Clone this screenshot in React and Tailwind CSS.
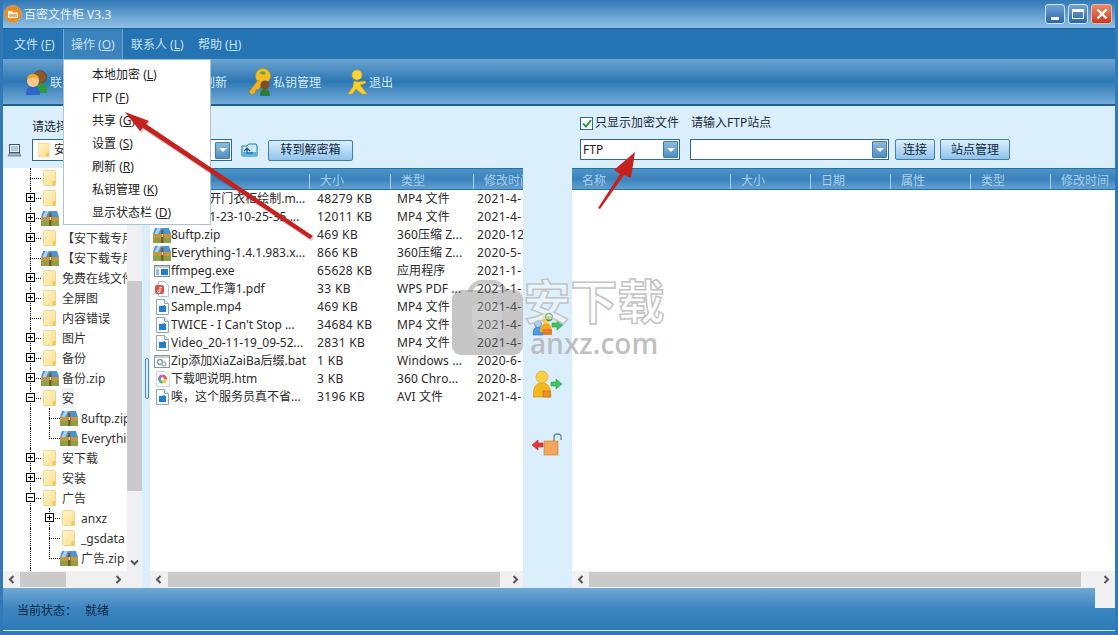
const files = [
  { icon: 'doc', name: '2021-0开门衣柜绘制.m...', size: '48279 KB', type: 'MP4 文件', date: '2021-4-' },
  { icon: 'doc', name: '2021-01-23-10-25-35....', size: '12011 KB', type: 'MP4 文件', date: '2021-4-' },
  { icon: 'zip', name: '8uftp.zip', size: '469 KB', type: '360压缩 Z...', date: '2020-12' },
  { icon: 'zip', name: 'Everything-1.4.1.983.x...', size: '866 KB', type: '360压缩 Z...', date: '2020-5-' },
  { icon: 'exe', name: 'ffmpeg.exe', size: '65628 KB', type: '应用程序', date: '2021-1-' },
  { icon: 'pdf', name: 'new_工作簿1.pdf', size: '33 KB', type: 'WPS PDF ...', date: '2021-1-' },
  { icon: 'doc', name: 'Sample.mp4', size: '469 KB', type: 'MP4 文件', date: '2021-4-' },
  { icon: 'doc', name: "TWICE - I Can't Stop ...", size: '34684 KB', type: 'MP4 文件', date: '2021-4-' },
  { icon: 'doc', name: 'Video_20-11-19_09-52...', size: '2831 KB', type: 'MP4 文件', date: '2021-4-' },
  { icon: 'bat', name: 'Zip添加XiaZaiBa后缀.bat', size: '1 KB', type: 'Windows ...', date: '2020-6-' },
  { icon: 'htm', name: '下载吧说明.htm', size: '3 KB', type: '360 Chro...', date: '2020-8-' },
  { icon: 'doc', name: '唉，这个服务员真不省...', size: '3196 KB', type: 'AVI 文件', date: '2021-4-' },
];

const tree = [
  { name: '' , mark: 'none' },
  { name: '', mark: 'plus' },
  { name: '', mark: 'plus', zip: true },
  { name: '【安下载专用', mark: 'plus' },
  { name: '【安下载专用', mark: 'none', zip: true },
  { name: '免费在线文件', mark: 'plus' },
  { name: '全屏图', mark: 'plus' },
  { name: '内容错误', mark: 'none' },
  { name: '图片', mark: 'plus' },
  { name: '备份', mark: 'plus' },
  { name: '备份.zip', mark: 'plus', zip: true },
  { name: '安', mark: 'minus', selected: true },
  { name: '8uftp.zip', level: 2, zip: true, mark: 'none' },
  { name: 'Everything', level: 2, zip: true, mark: 'none', last: true },
  { name: '安下载', mark: 'plus' },
  { name: '安装', mark: 'plus' },
  { name: '广告', mark: 'minus' },
  { name: 'anxz', level: 2, mark: 'plus' },
  { name: '_gsdata', level: 2, mark: 'none' },
  { name: '广告.zip', level: 2, zip: true, mark: 'none', last: true },
];

const menuItems = [['本地加密', 'L'], ['FTP', 'F'], ['共享', 'G'], ['设置', 'S'], ['刷新', 'R'], ['私钥管理', 'K'], ['显示状态栏', 'D']];

const Folder = () => (
  <svg width="14" height="17" viewBox="0 0 14 17" className="shrink-0">
    <defs>
      <linearGradient id="fold" x1="0" y1="0" x2="1" y2="1">
        <stop offset="0" stopColor="#fff4cc" />
        <stop offset="1" stopColor="#fbdf8e" />
      </linearGradient>
    </defs>
    <path d="M1.5.5h10a1 1 0 0 1 1 1v14h-11a1 1 0 0 1-1-1v-13a1 1 0 0 1 1-1z" fill="url(#fold)" stroke="#eed68c" />
    <path d="M9.5 15.5v-4l3-1v5z" fill="#f3c95f" />
  </svg>
);

const Zip = () => (
  <svg width="18" height="15" viewBox="0 0 18 15" className="shrink-0">
    <path d="M2 0h14l2 6H0z" fill="#4b95d4" />
    <path d="M1.500 6l3-6h3.500l-3 6z" fill="#a9d4f2" />
    <rect y="6" width="18" height="4" fill="#c8963f" />
    <rect y="10" width="18" height="5" fill="#8aa14a" />
    <rect x="8" y="2" width="2.500" height="13" fill="#7a5a28" />
    <rect x="8.500" y="6" width="1.500" height="3" fill="#f2d27a" />
  </svg>
);

const FileIcon = ({ type }) => {
  if (type === 'zip') return <Zip />;
  if (type === 'exe')
    return (
      <svg width="16" height="12" viewBox="0 0 16 12">
        <rect x=".5" y=".5" width="15" height="11" fill="#fff" stroke="#7a8a99" />
        <rect x="1" y="1" width="14" height="2" fill="#c5ccd3" />
        <rect x="7" y="4" width="7" height="6" fill="#1c7ed0" />
        <path d="M2 5h3M2 7h3M2 9h3" stroke="#1c7ed0" />
      </svg>
    );
  if (type === 'pdf')
    return (
      <svg width="14" height="16" viewBox="0 0 14 16">
        <path d="M3.5.5h6l4 4v11h-10z" fill="#fff" stroke="#b9c0c7" />
        <rect y="4" width="9" height="9" rx="2" fill="#d9504e" />
        <path d="M5 6v4.5a1.2 1.2 0 1 1-1.2-1.2M5 6l2 1" stroke="#fff" fill="none" />
      </svg>
    );
  if (type === 'bat')
    return (
      <svg width="16" height="13" viewBox="0 0 16 13">
        <rect x=".5" y=".5" width="15" height="12" fill="#fff" stroke="#8d959d" />
        <rect x="1" y="1" width="14" height="2" fill="#c9ced3" />
        <circle cx="6" cy="7" r="2.5" fill="none" stroke="#8b98a5" strokeWidth="1.4" />
        <circle cx="10" cy="9" r="2" fill="none" stroke="#a8b2bb" strokeWidth="1.4" />
      </svg>
    );
  if (type === 'htm')
    return (
      <svg width="15" height="16" viewBox="0 0 15 16">
        <path d="M1.5.5h9l4 4v11h-13z" fill="#fff" stroke="#cfd4d9" />
        <path d="M7.5 3.5a4.5 4.5 0 0 1 4.5 4.5H7.5z" fill="#f0524f" />
        <path d="M12 8a4.5 4.5 0 0 1-4.5 4.5V8z" fill="#f7c531" />
        <path d="M7.5 12.5A4.5 4.5 0 0 1 3 8h4.5z" fill="#49b96c" />
        <path d="M3 8a4.5 4.5 0 0 1 4.5-4.5V8z" fill="#b25be0" />
        <circle cx="7.5" cy="8" r="1.7" fill="#fff" />
      </svg>
    );
  return (
    <svg width="13" height="16" viewBox="0 0 13 16">
      <path d="M.5.5h8l4 4v11H.5z" fill="#fff" stroke="#8fa6ba" />
      <path d="M8.5.5v4h4" fill="#e6edf3" stroke="#8fa6ba" />
      <rect x="3" y="7" width="7" height="6" fill="#1f7fd1" />
      <path d="M3 8.5l6-2" stroke="#1f7fd1" strokeWidth="1.2" />
    </svg>
  );
};

// tree guide: dotted stem, optional elbow and +/- box on top of it
const Stem = ({ width, elbow, mark, last }) => (
  <div className="relative self-stretch shrink-0" style={{ width }}>
    <div className={`absolute left-0 top-0 border-l border-dotted border-black ${last ? 'h-[11px]' : 'h-full'}`} />
    {elbow && <div className="absolute left-0 top-[10px] w-[11px] border-t border-dotted border-black" />}
    {mark && mark !== 'none' && (
      <div className="absolute left-[-4px] top-[5px] w-[9px] h-[9px] border border-black bg-white flex items-center justify-center">
        <div className="relative w-[5px] h-[1px] bg-black">
          {mark === 'plus' && <div className="absolute left-[2px] top-[-2px] w-[1px] h-[5px] bg-black" />}
        </div>
      </div>
    )}
  </div>
);

const TreeRow = ({ item }) => (
  <div className="h-5 flex items-center pl-[27px] whitespace-nowrap text-[12px] text-[#333]">
    {item.level === 2 ? (
      <>
        <Stem width={19} />
        <Stem width={13} elbow mark={item.mark} last={item.last} />
      </>
    ) : (
      <Stem width={13} elbow mark={item.mark} />
    )}
    {item.zip ? (
      <div className="-ml-[2px] mr-[3px]"><Zip /></div>
    ) : (
      <div className="mr-[5px]"><Folder /></div>
    )}
    <span className={`pt-[2px] ${item.selected ? 'bg-[#efeff1]' : ''}`}>{item.name}</span>
  </div>
);

const ComboArrow = () => (
  <div className="w-[15px] h-[17px] border border-[#3f7aa8] bg-linear-to-b from-[#8dbbe0] to-[#4f8fc2] flex items-center justify-center shrink-0 rounded-[1px]">
    <div className="w-0 h-0 border-x-[4px] border-x-transparent border-t-[4px] border-t-white" />
  </div>
);

const Btn = ({ w, children }) => (
  <button className={`${w} h-[21px] border border-[#3f80a8] rounded-[2px] bg-linear-to-b from-[#dcefFB] to-[#8fc3ec] text-[12px] text-[#10283c] flex items-center justify-center`}>
    {children}
  </button>
);

const HeadCell = ({ w, children }) => (
  <div className={`${w} h-[15px] border-l border-[#a9d0ea] pl-[10px] flex items-center shrink-0`}>{children}</div>
);

const Scroll = ({ className = '', thumb, rightAt }) => (
  <div className={`h-[17px] bg-[#f0eff2] flex items-center relative ${className}`}>
    <svg width="7" height="9" viewBox="0 0 7 9" className="absolute left-[5px] top-[4px]">
      <path d="M5.5 1L2 4.5 5.5 8" fill="none" stroke="#555" strokeWidth="2" />
    </svg>
    <div className="h-[15px] bg-[#cbc9cc]" style={thumb} />
    <svg width="7" height="9" viewBox="0 0 7 9" className="absolute top-[4px]" style={{ right: rightAt }}>
      <path d="M1.5 1l3.500 3.500L1.500 8" fill="none" stroke="#555" strokeWidth="2" />
    </svg>
  </div>
);

const GreenArrow = ({ x, y }) => (
  <path transform={`translate(${x} ${y})`} d="M0 3h5V0l6 5-6 5V7H0z" fill="#42c45a" stroke="#2b9a44" strokeWidth=".6" />
);

const Watermark = () => (
  <div className="absolute left-[452px] top-[280px] flex pointer-events-none">
    <svg width="71" height="76" viewBox="0 0 71 76">
      <path d="M18 12C20-2 50-2 53 12" fill="none" stroke="#8a8a8a" strokeOpacity=".45" strokeWidth="5" />
      <rect y="10" width="71" height="65" rx="9" fill="#777" fillOpacity=".42" />
      <path d="M20 26l15-6 15 6v17c0 10-8 16-15 19-7-3-15-9-15-19z" fill="#fff" fillOpacity=".14" />
    </svg>
    <div className="-ml-[1px] w-[144px] flex flex-col items-center -mt-[8px]">
      <div className="text-[47px] leading-[58px] font-bold text-white/35 [-webkit-text-stroke:1.5px_#c4c4c4]">安下载</div>
      <div className="text-[28px] leading-[28px] font-semibold text-[#b5b5b5]/85 font-['Open_Sans',sans-serif] -mt-[1px]">anxz.com</div>
    </div>
  </div>
);

const Arrows = () => (
  <svg width="1118" height="635" viewBox="0 0 1118 635" className="absolute left-0 top-0 pointer-events-none">
    <path d="M125 112l24 9-3 3 167 112-3 3-167-111-3 3z" fill="#000" fillOpacity=".18" transform="translate(1 2)" />
    <path d="M125 112l24 9-3 3 167 112-3 3-167-111-3 3z" fill="#c7211f" />
    <path d="M598 208l2 1 24-34 7 3 4-26-21 18 6 4z" fill="#c7211f" />
  </svg>
);

export default function App() {
  return (
    <div className="relative w-[1118px] h-[635px] overflow-hidden flex flex-col border-x-[3px] border-[#3279b6] bg-[#dbeefc] font-['Noto_Sans','Noto_Sans_CJK_SC',sans-serif]">
      {/* title bar */}
      <div className="h-[28px] flex items-center bg-linear-to-b from-[#2f78b6] to-[#8fc1e6] shrink-0">
        <svg width="18" height="18" viewBox="0 0 18 18" className="ml-[1px]">
          <circle cx="9" cy="9" r="8.5" fill="#ee8a1e" stroke="#c9a06a" />
          <path d="M4 6h4l1 1.500h5V13H4z" fill="#fff" />
          <rect x="5" y="9" width="8" height="3" fill="#f2b15f" />
        </svg>
        <span className="ml-[2px] pt-[1px] text-[12px] text-[#e8f3fb]">百密文件柜 V3.3</span>
        <div className="ml-auto flex gap-[3px] mr-[3px]">
          <div className="w-[20px] h-[20px] rounded-[3px] border border-[#cfe4f5] bg-linear-to-b from-[#6fa4d6] to-[#2a66ad] flex items-end justify-center pb-[3px]">
            <div className="w-[8px] h-[3px] bg-white" />
          </div>
          <div className="w-[20px] h-[20px] rounded-[3px] border border-[#cfe4f5] bg-linear-to-b from-[#6fa4d6] to-[#2a66ad] flex items-center justify-center">
            <div className="w-[12px] h-[10px] border border-t-[3px] border-white" />
          </div>
          <div className="w-[21px] h-[20px] rounded-[3px] border border-[#e9b9a8] bg-linear-to-b from-[#ee8a66] to-[#c8361a] flex items-center justify-center">
            <svg width="12" height="12" viewBox="0 0 12 12"><path d="M1.500 1.500l9 9M10.500 1.500l-9 9" stroke="#fff" strokeWidth="2.400" /></svg>
          </div>
        </div>
      </div>

      {/* menu bar */}
      <div className="h-[31px] flex items-center bg-[#2473b3] text-[12px] text-[#c9e0f1] border-t border-[#1d6199] shrink-0">
        <div className="w-[60px] pl-[11px] pt-[2px]">文件 (<u>F</u>)</div>
        <div className="w-[60px] h-full pl-[7px] pt-[2px] flex items-center border-x border-[#6fa8d3] bg-[#3a83bd]"><span>操作 (<u>O</u>)</span></div>
        <div className="w-[67px] pl-[8px] pt-[2px]">联系人 (<u>L</u>)</div>
        <div className="pl-[8px] pt-[2px]">帮助 (<u>H</u>)</div>
      </div>

      {/* tool bar */}
      <div className="h-[47px] flex items-center bg-linear-to-b from-[#6ba3cf] via-[#2b78b5] to-[#74acd8] border-b-2 border-[#1e5f92] text-[12px] text-[#d8eaf6] shrink-0 whitespace-nowrap">
        <svg width="23" height="26" viewBox="0 0 23 26" className="ml-[22px]">
          <circle cx="15" cy="8" r="6.500" fill="#8a5a2b" stroke="#5a3a1a" strokeWidth=".6" />
          <path d="M9 24c0-7 3-10 7-10s6 3 6 10z" fill="#2f9a3c" />
          <path d="M1 26c0-7 3-10 7-10s7 3 7 10z" fill="#2f66c9" />
          <circle cx="8" cy="12" r="6" fill="#fbc98e" />
          <path d="M2 11c0-5 3-6 6-6s6 2 6 5c-3-2-8-2-12 1z" fill="#f0a521" />
        </svg>
        <span className="ml-[2px] pt-[2px]">联系人</span>
        <span className="ml-[117px] pt-[2px]">刷新</span>
        <svg width="24" height="28" viewBox="0 0 24 28" className="ml-[21px]">
          <circle cx="15" cy="8" r="7.500" fill="#f3bb24" stroke="#c9920f" strokeWidth=".6" />
          <path d="M11 5c2-2 5-2 7 0l-2 2c-2-1-3-1-5-2z" fill="#6aa63a" />
          <path d="M10 12L1 24l3 3 3-2 1-3 3-1 3-5z" fill="#f0b21e" stroke="#b98512" strokeWidth=".6" />
          <circle cx="17" cy="17" r="4.500" fill="#7c4f26" />
          <path d="M12 28c0-5 2-7 5-7s5 2 5 7z" fill="#2c7d3a" />
        </svg>
        <span className="ml-[1px] pt-[2px]">私钥管理</span>
        <svg width="21" height="26" viewBox="0 0 21 26" className="ml-[27px]">
          <circle cx="9" cy="6" r="5" fill="#fbd53a" stroke="#d7a312" strokeWidth=".6" />
          <path d="M6 12l-1 6-5 7h4l4-5 6 5h5l-7-9 6-2-1-2-7 1z" fill="#f9cf2c" stroke="#d7a312" strokeWidth=".6" />
        </svg>
        <span className="pt-[2px]">退出</span>
      </div>

      {/* panes */}
      <div className="flex-1 flex min-h-0 text-[12px] text-[#222]">
        <div className="w-[520px] shrink-0 flex flex-col">
          <div className="h-[62px] bg-[#dbeefc] shrink-0 relative">
            <div className="mt-[12px] h-[18px] pl-[29px] flex items-center text-[#1c2b38]">请选择文件夹</div>
            <div className="mt-[3px] flex items-center">
              <svg width="15" height="13" viewBox="0 0 15 13" className="ml-[4px]">
                <rect x="2.500" y=".5" width="10" height="8" fill="#e6edf3" stroke="#44586c" />
                <rect x="4" y="2" width="7" height="5" fill="#a9c9e2" />
                <path d="M1 12l1.500-3h10l1.500 3z" fill="#aab6c2" stroke="#44586c" strokeWidth=".6" />
              </svg>
              <div className="ml-[10px] w-[200px] h-[22px] border border-[#2a6a95] bg-white flex items-center pl-[4px] pr-[1px]">
                <div className="scale-[0.9]"><Folder /></div>
                <span className="ml-[3px]">安</span>
                <div className="ml-auto"><ComboArrow /></div>
              </div>
              <svg width="17" height="15" viewBox="0 0 17 15" className="ml-[9px]">
                <path d="M1 13V3h5l1.500-2H15l1 2v10z" fill="#cfe8f8" stroke="#1f7aad" />
                <rect x="1" y="9" width="15" height="4" fill="#5eb2df" />
                <path d="M3 8l3-3 3 3M6 5v5h6" fill="none" stroke="#0f5f96" strokeWidth="1.200" />
              </svg>
              <div className="ml-[10px]"><Btn w="w-[85px]">转到解密箱</Btn></div>
            </div>
          </div>
          <div className="flex-1 flex min-h-0">
            <div className="w-[139px] shrink-0 flex flex-col">
              <div className="flex-1 flex min-h-0">
                <div className="w-[124px] bg-white overflow-hidden">
                  {tree.map((item, i) => <TreeRow key={i} item={item} />)}
                  <div className="ml-[27px] h-[3px] border-l border-dotted border-black" />
                </div>
                <div className="w-[15px] bg-[#f0eff2] relative">
                  <div className="absolute left-0 top-[113px] w-full h-[210px] bg-[#cbc9cc]" />
                  <svg width="9" height="7" viewBox="0 0 9 7" className="absolute left-[3px] bottom-[5px]">
                    <path d="M1 1.500l3.500 3.500L8 1.500" fill="none" stroke="#555" strokeWidth="2" />
                  </svg>
                </div>
              </div>
              <Scroll thumb={{ marginLeft: 17, width: 46 }} rightAt={20} />
            </div>
            <div className="w-[8px] bg-[#dbeefc] shrink-0 relative">
              <div className="absolute left-[3px] top-[190px] w-[4px] h-[41px] rounded-full border border-[#4f86b8]" />
            </div>
            <div className="flex-1 min-w-0 flex flex-col">
              <div className="h-[22px] pt-[4px] shrink-0 flex items-center overflow-hidden bg-linear-to-b from-[#4c93c8] via-[#3b82bb] to-[#5fa0d2] border-y border-[#2a6fa3] text-[#a9d0ea] whitespace-nowrap">
                <div className="w-[159px] shrink-0 pl-[10px]">名称</div>
                <HeadCell w="w-[81px]">大小</HeadCell>
                <HeadCell w="w-[83px]">类型</HeadCell>
                <HeadCell w="w-[60px]">修改时间</HeadCell>
              </div>
              <div className="flex-1 bg-white overflow-hidden">
                {files.map((f) => (
                  <div key={f.name} className="h-[18px] flex items-center whitespace-nowrap text-[#2b2b2b]">
                    <div className="w-[21px] shrink-0 pl-[3px] flex justify-center"><FileIcon type={f.icon} /></div>
                    <div className="w-[146px] shrink-0 overflow-hidden">{f.name}</div>
                    <div className="w-[80px] shrink-0 tracking-[0.35px]">{f.size}</div>
                    <div className="w-[80px] shrink-0 tracking-[0.1px]">{f.type}</div>
                    <div className="w-[46px] shrink-0 overflow-hidden tracking-[0.35px]">{f.date}</div>
                  </div>
                ))}
              </div>
              <Scroll thumb={{ marginLeft: 18, width: 332 }} rightAt={4} />
            </div>
          </div>
        </div>

        {/* transfer buttons */}
        <div className="w-[49px] shrink-0 bg-[#dbeefc] flex flex-col items-center pt-[206px] relative">
          <svg width="32" height="24" viewBox="0 0 32 24">
            <path d="M1 23c0-6 2-8 5-8s5 2 5 8z" fill="#4f9ae0" stroke="#2c6fb5" strokeWidth=".6" />
            <circle cx="6" cy="12" r="3.500" fill="#a8d0f4" stroke="#2c6fb5" strokeWidth=".6" />
            <path d="M8 20c0-6 3-9 6-9s6 3 6 9z" fill="#f3a91a" />
            <circle cx="14" cy="7" r="4" fill="#fbd045" />
            <circle cx="17" cy="5" r="3.500" fill="none" stroke="#3f9a3c" strokeWidth="1.400" />
            <rect x="11" y="17" width="9" height="6" fill="#e87a2c" />
            <GreenArrow x={20} y={8} />
          </svg>
          <svg width="30" height="28" viewBox="0 0 30 28" className="mt-[34px]">
            <path d="M0 27c0-10 3-14 9-14s9 4 9 14z" fill="#f6b81f" stroke="#c98a10" strokeWidth=".6" />
            <circle cx="9" cy="7" r="6" fill="#fbd045" stroke="#d59b18" strokeWidth=".6" />
            <rect x="10" y="21" width="7" height="6" fill="#ee8f2a" stroke="#b8661a" strokeWidth=".6" />
            <GreenArrow x={18} y={9} />
          </svg>
          <svg width="31" height="23" viewBox="0 0 31 23" className="mt-[35px]">
            <path d="M11 10H6V7L0 12l6 5v-3h5z" fill="#e3393b" stroke="#b52326" strokeWidth=".6" />
            <rect x="12" y="8" width="14" height="14" fill="#f3a75c" stroke="#c97a2b" strokeWidth=".6" />
            <path d="M22 8V4c0-4 7-4 7 0v3" fill="none" stroke="#5f8fa6" strokeWidth="1.400" />
          </svg>
        </div>

        {/* ftp side */}
        <div className="flex-1 min-w-0 flex flex-col">
          <div className="h-[62px] bg-[#dbeefc] shrink-0">
            <div className="mt-[8px] h-[18px] pl-[8px] flex items-center text-[#1c2b38] whitespace-nowrap">
              <div className="w-[13px] h-[13px] border border-[#2a6a95] bg-white flex items-center justify-center">
                <svg width="10" height="9" viewBox="0 0 10 9"><path d="M1 4.500L4 7.500 9 1" fill="none" stroke="#2e9a47" strokeWidth="2" /></svg>
              </div>
              <span className="ml-[2px]">只显示加密文件</span>
              <span className="ml-[12px]">请输入FTP站点</span>
            </div>
            <div className="mt-[7px] flex items-center pl-[8px]">
              <div className="w-[100px] h-[21px] border border-[#2a6a95] bg-white flex items-center pl-[2px] pr-[1px]">
                FTP
                <div className="ml-auto"><ComboArrow /></div>
              </div>
              <div className="ml-[10px] w-[199px] h-[21px] border border-[#2a6a95] bg-white flex items-center justify-end pr-[1px]"><ComboArrow /></div>
              <div className="ml-[6px]"><Btn w="w-[40px]">连接</Btn></div>
              <div className="ml-[5px]"><Btn w="w-[70px]">站点管理</Btn></div>
            </div>
          </div>
          <div className="flex-1 flex flex-col min-h-0">
            <div className="h-[22px] pt-[4px] shrink-0 flex items-center bg-linear-to-b from-[#4c93c8] via-[#3b82bb] to-[#5fa0d2] border-y border-[#2a6fa3] text-[#a9d0ea] whitespace-nowrap">
              <div className="w-[158px] shrink-0 pl-[10px]">名称</div>
              <HeadCell w="w-[80px]">大小</HeadCell>
              <HeadCell w="w-[80px]">日期</HeadCell>
              <HeadCell w="w-[80px]">属性</HeadCell>
              <HeadCell w="w-[80px]">类型</HeadCell>
              <HeadCell w="w-[65px]">修改时间</HeadCell>
            </div>
            <div className="flex-1 bg-white" />
            <Scroll thumb={{ marginLeft: 17, width: 492 }} rightAt={5} />
          </div>
        </div>
      </div>

      {/* status bar */}
      <div className="h-[42px] pt-[4px] shrink-0 flex items-center bg-linear-to-b from-[#6ea8d6] via-[#3c85bf] to-[#2f7ab8] text-[12px] text-[#0d2a44]">
        <span className="ml-[14px]">当前状态：</span>
        <span className="ml-[8px]">就绪</span>
      </div>
      <div className="h-[5px] shrink-0 border-t border-[#d6e8f5] bg-[#2f78bb]" />

      <div className="absolute right-0 top-[588px] w-[20px] h-[20px] bg-[#f0eff2]" />
      <div className="absolute left-[60px] top-[59px] w-[148px] h-[166px] border border-[#a8c4d8] bg-white text-[12px] text-[#222] pt-[3px]">
        {menuItems.map(([label, key]) => (
          <div key={key} className="h-[23px] pl-[28px] flex items-center whitespace-nowrap">
            {label} (<u>{key}</u>)
          </div>
        ))}
      </div>
      <div className="absolute left-[-3px] top-0 w-[1118px] h-[635px] pointer-events-none">
        <Watermark />
        <Arrows />
      </div>
    </div>
  );
}
